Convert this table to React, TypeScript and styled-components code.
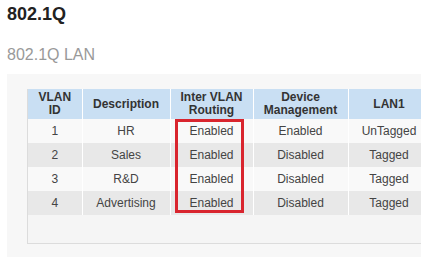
import * as React from "react";
import styled, {createGlobalStyle} from "styled-components";

interface vlanrow {
    id: number
    desc: string
    routing: string
    mgmt: string
    lan1: string
}

const GlobalStyle = createGlobalStyle`
body {
    margin: 0;
    background: #fff;
    font-family: "Liberation Sans", Arial, sans-serif;
    overflow: hidden;
}
`

const Page = styled.div`
padding: 0 0 0 7px;
width: 421px;
height: 257px;
box-sizing: border-box;
overflow: hidden;
`

const Title = styled.h1`
margin: 0;
padding-top: 3px;
font-size: 18px;
line-height: 22px;
font-weight: bold;
color: #222;
`

const SubTitle = styled.h2`
margin: 20px 0 0 0;
font-size: 16px;
line-height: 20px;
font-weight: normal;
color: #999;
`

const Panel = styled.div`
margin-top: 9px;
background: #f7f7f7;
padding: 15px 0 13px 20px;
width: 520px;
`

const TableBox = styled.div`
position: relative;
width: 402px;
border: 1px solid #dcdcdc;
border-top: 0;
background: #f5f5f5;
padding-bottom: 28px;
`

const Grid = styled.table`
border-collapse: collapse;
table-layout: fixed;
width: 402px;
font-size: 12px;
`

const HeadCell = styled.th`
height: 30px;
padding: 0;
background: #c9dff3;
color: #333;
font-weight: bold;
line-height: 13px;
text-align: center;
border-right: 1px solid #fff;
`

const Row = styled.tr<{odd: boolean}>`
height: 24px;
background: ${p => p.odd ? "#f9f9f9" : "#e8e8e8"};
`

const Cell = styled.td`
padding: 0;
text-align: center;
color: #444;
border-right: 1px solid #fff;
`

// red frame drawn over the Inter VLAN Routing column
const Highlight = styled.div`
position: absolute;
left: 147px;
top: 30px;
width: 69px;
height: 94px;
box-sizing: border-box;
border: 3px solid #d9252e;
pointer-events: none;
`

let widths: Array<number> = [54, 88, 83, 95, 82]

let rows: Array<vlanrow> = [
    {id: 1, desc: "HR", routing: "Enabled", mgmt: "Enabled", lan1: "UnTagged"},
    {id: 2, desc: "Sales", routing: "Enabled", mgmt: "Disabled", lan1: "Tagged"},
    {id: 3, desc: "R&D", routing: "Enabled", mgmt: "Disabled", lan1: "Tagged"},
    {id: 4, desc: "Advertising", routing: "Enabled", mgmt: "Disabled", lan1: "Tagged"},
]

let App: React.FC = () => {
    return (
        <Page>
            <GlobalStyle/>
            <Title>802.1Q</Title>
            <SubTitle>802.1Q LAN</SubTitle>
            <Panel>
                <TableBox>
                    <Grid>
                        <colgroup>
                            {widths.map((w, i) => <col key={i} style={{width: w}}/>)}
                        </colgroup>
                        <thead>
                        <tr>
                            <HeadCell>VLAN<br/>ID</HeadCell>
                            <HeadCell>Description</HeadCell>
                            <HeadCell>Inter VLAN<br/>Routing</HeadCell>
                            <HeadCell>Device<br/>Management</HeadCell>
                            <HeadCell>LAN1</HeadCell>
                        </tr>
                        </thead>
                        <tbody>
                        {
                            rows.map((r, i) => (
                                <Row key={r.id} odd={i % 2 === 0}>
                                    <Cell>{r.id}</Cell>
                                    <Cell>{r.desc}</Cell>
                                    <Cell>{r.routing}</Cell>
                                    <Cell>{r.mgmt}</Cell>
                                    <Cell>{r.lan1}</Cell>
                                </Row>
                            ))
                        }
                        </tbody>
                    </Grid>
                    <Highlight/>
                </TableBox>
            </Panel>
        </Page>
    )
}

export default App
